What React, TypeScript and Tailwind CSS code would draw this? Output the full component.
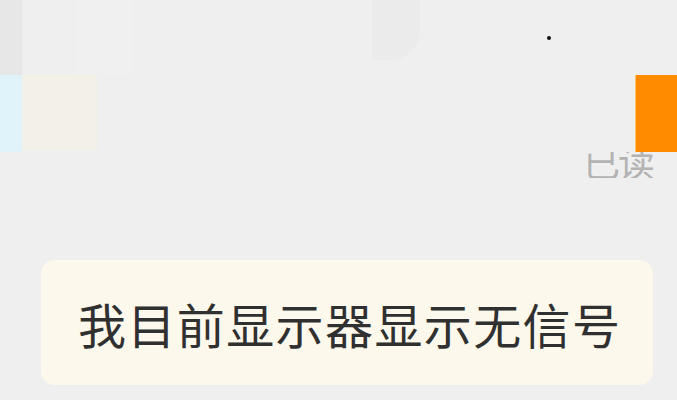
import React from "react";

export default function App() {
  const cjk = { fontFamily: '"Noto Sans CJK SC", "Noto Sans", sans-serif' };
  return (
    <div className="w-[677px] h-[400px] overflow-hidden bg-[#efefef] flex flex-col" style={cjk}>
      {/* top row */}
      <div className="h-[75px] flex shrink-0">
        <div className="w-[22px] bg-[#e7e7e7]" />
        <div className="w-[55px]" />
        <div className="w-[55px] bg-[#f0f0f0]" />
        <div className="w-[250px]" />
        <div className="relative flex-1">
          <div className="absolute left-[-10px] top-0 w-[48px] h-[60px] rounded-br-[30px] bg-[#ebebeb]" />
          <div className="absolute left-[165px] top-[36px] w-[4px] h-[4px] rounded-full bg-[#111]" />
        </div>
      </div>
      {/* second row */}
      <div className="h-[77px] flex shrink-0">
        <div className="w-[22px] bg-[#e1f3fa]" />
        <div className="w-[75px] h-[75px] bg-[#f3f0e8]" />
        <div className="flex-1" />
        <div className="w-[42px] bg-[#ff8c00] border-l border-[#ffc766]" />
      </div>
      {/* read receipt, top clipped */}
      <div className="h-[26px] overflow-hidden flex justify-end pr-[24px] shrink-0">
        <span className="text-[37px] leading-[37px] mt-[-9px] text-[#b3b3b3] tracking-[-2px]">已读</span>
      </div>
      {/* bubble */}
      <div className="mt-[82px] ml-[41px] mr-[24px] h-[125px] rounded-[14px] bg-[#fdf8ec] flex items-center pl-[37px]">
        <span className="text-[48px] leading-none text-[#303030] tracking-[1.4px] whitespace-nowrap">
          我目前显示器显示无信号
        </span>
      </div>
    </div>
  );
}
